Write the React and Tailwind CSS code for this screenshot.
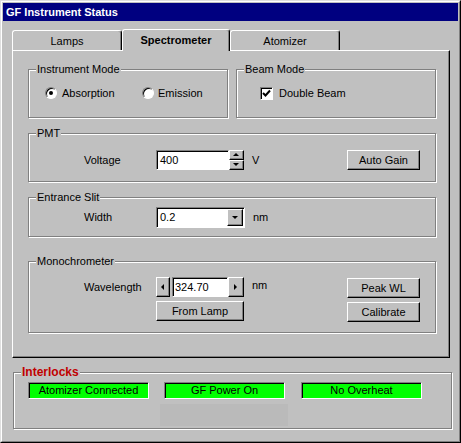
import React from "react";

const raised =
  "border border-t-white border-l-white border-r-black border-b-black shadow-[inset_-1px_-1px_0_#808080]";
const sunken =
  "border border-t-[#808080] border-l-[#808080] border-r-white border-b-white shadow-[inset_1px_1px_0_#000]";
const etched = "relative border border-[#808080] shadow-[1px_1px_0_#fff,inset_1px_1px_0_#fff]";

const GroupLabel = ({ children, className = "" }) => (
  <div className={`absolute -top-[7px] left-[7px] px-[1px] bg-[#c0c0c0] leading-[13px] ${className}`}>
    {children}
  </div>
);

const Btn = ({ children, className = "" }) => (
  <div className={`${raised} flex items-center justify-center bg-[#c0c0c0] ${className}`}>{children}</div>
);

const Radio = ({ checked }) => (
  <div className="w-[12px] h-[12px] rounded-full bg-white border border-t-[#808080] border-l-[#808080] border-r-white border-b-white shadow-[inset_1px_1px_0_#000] flex items-center justify-center">
    {checked && <div className="w-[4px] h-[4px] rounded-full bg-black" />}
  </div>
);

const Arrow = ({ dir }) => {
  const pts = {
    up: "0,3 3,0 6,3",
    down: "0,0 6,0 3,3",
    left: "3,0 3,6 0,3",
    right: "0,0 0,6 3,3",
  }[dir];
  const size = dir === "up" || dir === "down" ? { w: 6, h: 3 } : { w: 3, h: 6 };
  return (
    <svg width={size.w + 1} height={size.h + 1} viewBox={`0 0 ${size.w + 1} ${size.h + 1}`}>
      <polygon points={pts} fill="#000" />
    </svg>
  );
};

const Light = ({ children }) => (
  <div className={`${sunken} w-[121px] h-[17px] bg-[#00ff00] flex items-center justify-center text-[11px] leading-none`}>
    {children}
  </div>
);

export default function App() {
  return (
    <div
      className="w-[461px] h-[443px] bg-[#c0c0c0] text-black text-[11px] border border-t-[#dfdfdf] border-l-[#dfdfdf] border-r-black border-b-black"
      style={{ fontFamily: '"Liberation Sans", Arial, sans-serif' }}
    >
      <div className="h-full border border-t-white border-l-white border-r-[#808080] border-b-[#808080] p-px">
        {/* Title bar */}
        <div className="h-[18px] bg-[#000080] text-white font-bold text-[11px] pl-[3px] flex items-center">
          GF Instrument Status
        </div>

        {/* Tabs */}
        <div className="mt-[8px] h-[21px] pl-[9px] flex items-end">
          <div className="w-[110px] h-[20px] border-t border-l border-t-white border-l-white border-r border-r-black shadow-[inset_-1px_0_0_#808080] rounded-tl-[3px] rounded-tr-[3px] flex items-center justify-center pt-[1px]">
            Lamps
          </div>
          <div className="relative z-10 -mb-px w-[108px] h-[22px] bg-[#c0c0c0] border-t border-l border-t-white border-l-white border-r border-r-black shadow-[inset_-1px_0_0_#808080] rounded-tl-[3px] rounded-tr-[3px] flex items-center justify-center font-bold pb-[1px]">
            Spectrometer
          </div>
          <div className="w-[110px] h-[20px] border-t border-l border-t-white border-l-white border-r border-r-black shadow-[inset_-1px_0_0_#808080] rounded-tl-[3px] rounded-tr-[3px] flex items-center justify-center pt-[1px]">
            Atomizer
          </div>
        </div>

        {/* Tab panel */}
        <div className={`ml-[9px] w-[438px] h-[308px] ${raised} pt-[18px] pl-[15px]`}>
          {/* Row 1 */}
          <div className="flex gap-[8px]">
            <div className={`${etched} w-[200px] h-[49px] pt-[16px] pl-[16px]`}>
              <GroupLabel>Instrument Mode</GroupLabel>
              <div className="flex items-center h-[14px]">
                <div className="w-[97px] flex items-center gap-[5px]">
                  <Radio checked />
                  <span>Absorption</span>
                </div>
                <div className="flex items-center gap-[4px]">
                  <Radio />
                  <span>Emission</span>
                </div>
              </div>
            </div>
            <div className={`${etched} w-[200px] h-[49px] pt-[16px] pl-[23px]`}>
              <GroupLabel>Beam Mode</GroupLabel>
              <div className="flex items-center h-[14px] gap-[6px]">
                <div className="w-[13px] h-[13px] bg-white border border-t-[#808080] border-l-[#808080] border-r-white border-b-white shadow-[inset_1px_1px_0_#000] flex items-center justify-center">
                  <svg width="9" height="9" viewBox="0 0 9 9">
                    <polyline points="1,4 3.5,6.5 8,1.5" fill="none" stroke="#000" strokeWidth="2" />
                  </svg>
                </div>
                <span>Double Beam</span>
              </div>
            </div>
          </div>

          {/* PMT */}
          <div className={`${etched} mt-[15px] w-[408px] h-[49px] pt-[16px] pl-[55px]`}>
            <GroupLabel>PMT</GroupLabel>
            <div className="flex items-center h-[20px]">
              <span className="w-[72px]">Voltage</span>
              <div className={`${sunken} w-[73px] h-[20px] bg-white pl-[3px] flex items-center`}>400</div>
              <div className="w-[15px] h-[20px] flex flex-col">
                <Btn className="h-[10px]">
                  <Arrow dir="up" />
                </Btn>
                <Btn className="h-[10px]">
                  <Arrow dir="down" />
                </Btn>
              </div>
              <span className="ml-[8px]">V</span>
              <Btn className="ml-auto mr-[15px] w-[73px] h-[20px]">Auto Gain</Btn>
            </div>
          </div>

          {/* Entrance Slit */}
          <div className={`${etched} mt-[15px] w-[408px] h-[40px] pt-[9px] pl-[55px]`}>
            <GroupLabel>Entrance Slit</GroupLabel>
            <div className="flex items-center h-[21px]">
              <span className="w-[72px]">Width</span>
              <div className={`${sunken} w-[89px] h-[21px] bg-white flex items-center pl-[3px] pr-[1px]`}>
                <span className="flex-1">0.2</span>
                <Btn className="w-[16px] h-[17px]">
                  <Arrow dir="down" />
                </Btn>
              </div>
              <span className="ml-[8px]">nm</span>
            </div>
          </div>

          {/* Monochrometer */}
          <div className={`${etched} mt-[24px] w-[408px] h-[72px] pl-[55px] flex`}>
            <GroupLabel>Monochrometer</GroupLabel>
            <div className="pt-[15px]">
              <div className="flex items-center h-[20px]">
                <span className="w-[72px]">Wavelength</span>
                <Btn className="w-[14px] h-[20px]">
                  <Arrow dir="left" />
                </Btn>
                <div className={`${sunken} ml-[2px] w-[56px] h-[20px] bg-white pl-[2px] flex items-center`}>324.70</div>
                <Btn className="w-[16px] h-[20px]">
                  <Arrow dir="right" />
                </Btn>
                <span className="ml-[8px] -mt-[3px]">nm</span>
              </div>
              <Btn className="mt-[4px] ml-[72px] w-[88px] h-[20px]">From Lamp</Btn>
            </div>
            <div className="ml-auto mr-[15px] pt-[16px] flex flex-col gap-[4px]">
              <Btn className="w-[73px] h-[20px]">Peak WL</Btn>
              <Btn className="w-[73px] h-[20px]">Calibrate</Btn>
            </div>
          </div>
        </div>

        {/* Interlocks */}
        <div className={`${etched} mt-[14px] ml-[10px] w-[439px] h-[57px] pt-[9px] pl-[14px]`}>
          <div className="absolute -top-[8px] left-[7px] px-[1px] bg-[#c0c0c0] leading-[14px] text-[12px] font-bold text-[#c00000]">
            Interlocks
          </div>
          <div className="flex">
            <Light>Atomizer Connected</Light>
            <div className="ml-[15px]">
              <Light>GF Power On</Light>
            </div>
            <div className="ml-[16px]">
              <Light>No Overheat</Light>
            </div>
          </div>
          <div className="mt-[5px] ml-[132px] w-[128px] h-[22px] bg-[#bababa]" />
        </div>
      </div>
    </div>
  );
}
